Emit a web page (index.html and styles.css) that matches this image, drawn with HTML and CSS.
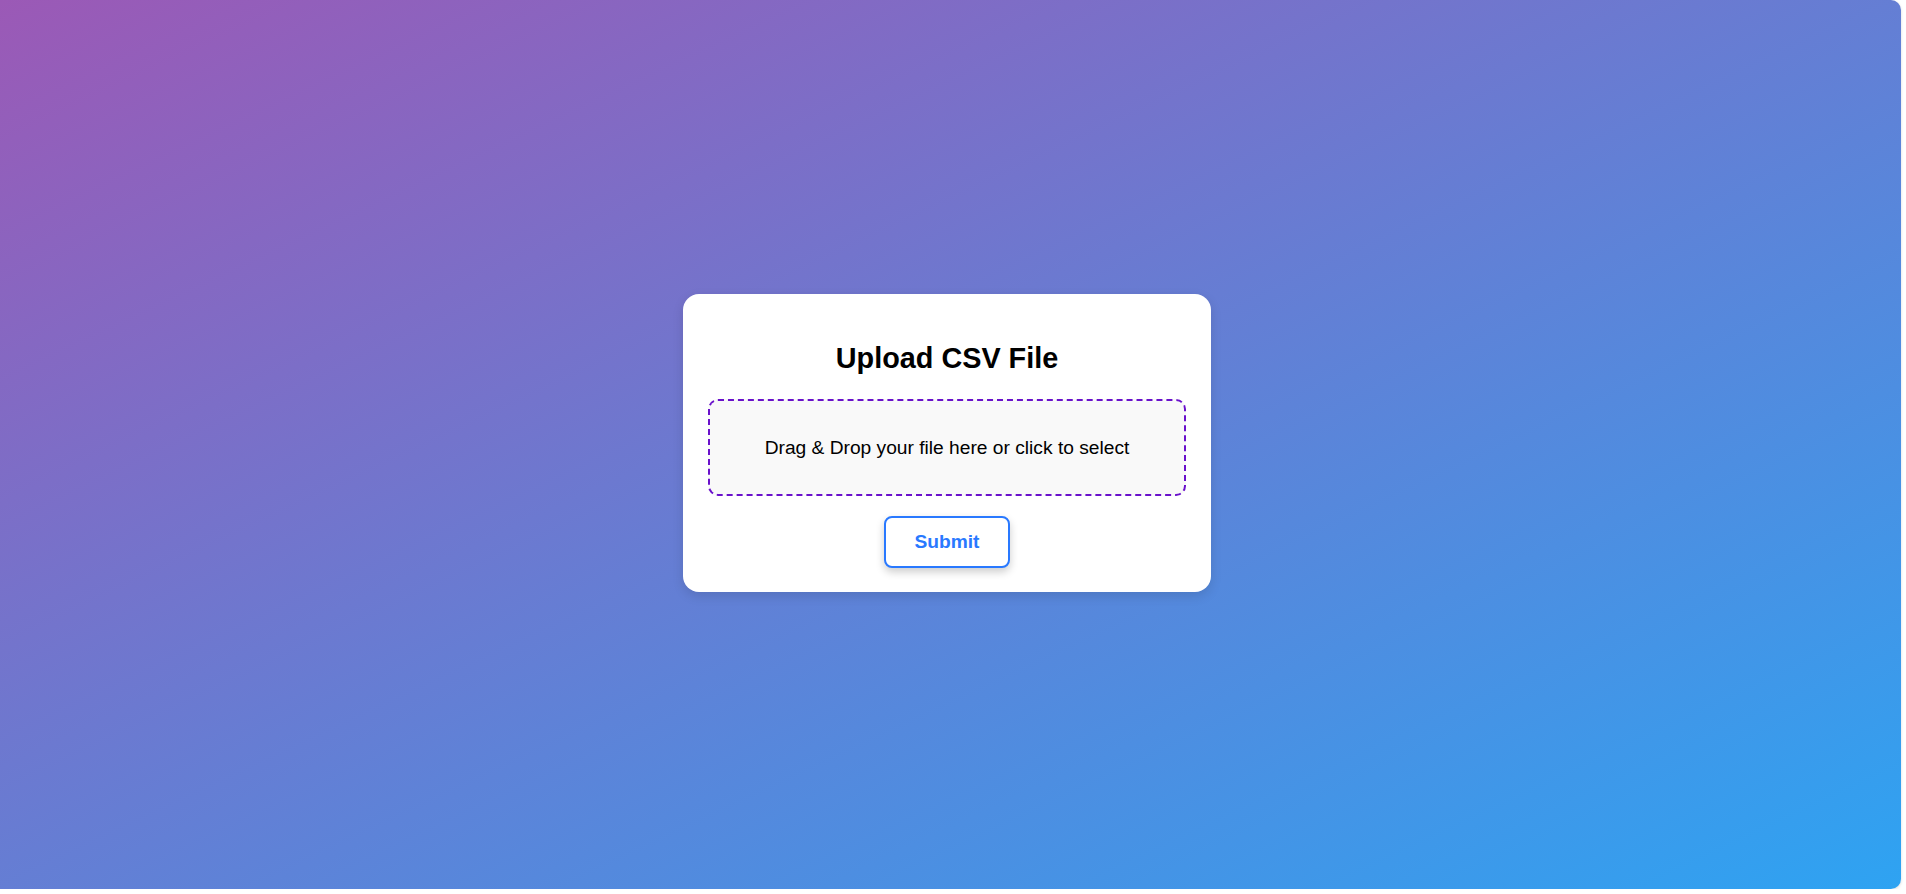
FILE: index.html
```html
<!DOCTYPE html>
<html lang="en">
<head>
<meta charset="utf-8">
<title>Upload CSV File</title>
<link rel="stylesheet" href="styles.css">
</head>
<body>
<div class="page">
  <div class="card">
    <h2 class="title">Upload CSV File</h2>
    <div class="dropzone">Drag &amp; Drop your file here or click to select</div>
    <button class="submit" type="button">Submit</button>
  </div>
</div>
</body>
</html>
```
FILE: styles.css
```css
html, body {
  margin: 0;
  padding: 0;
  background: #ffffff;
  font-family: "Liberation Sans", Arial, sans-serif;
}

.page {
  box-sizing: border-box;
  width: 1901px;
  height: 889px;
  padding: 0 7px 3px 0;
  border-radius: 0 10px 10px 0;
  background: linear-gradient(to bottom right, #9b59b6, #2ea3f2);
  box-shadow: 0 1px 3px rgba(0, 0, 0, 0.15);
  display: flex;
  align-items: center;
  justify-content: center;
}

.card {
  box-sizing: border-box;
  width: 528px;
  padding: 25px 25px 24px;
  background: #ffffff;
  border-radius: 16px;
  box-shadow: 0 4px 12px rgba(0, 0, 0, 0.12);
  display: flex;
  flex-direction: column;
  align-items: center;
}

.title {
  margin: 23px 0 24px;
  font-size: 28.8px;
  font-weight: bold;
  line-height: 33px;
  color: #000;
}

.dropzone {
  box-sizing: border-box;
  width: 100%;
  height: 97px;
  border: 2px dashed #6a11cb;
  border-radius: 10px;
  background: #f9f9f9;
  display: flex;
  align-items: center;
  justify-content: center;
  font-size: 19.2px;
  color: #000;
}

.submit {
  box-sizing: border-box;
  margin-top: 20px;
  height: 52px;
  padding: 0 28px;
  background: #ffffff;
  border: 2px solid #2979ff;
  border-radius: 8px;
  color: #2979ff;
  font-family: "Liberation Sans", Arial, sans-serif;
  font-size: 19.2px;
  font-weight: bold;
  box-shadow: 0 4px 8px rgba(0, 0, 0, 0.2);
  cursor: pointer;
}
```
